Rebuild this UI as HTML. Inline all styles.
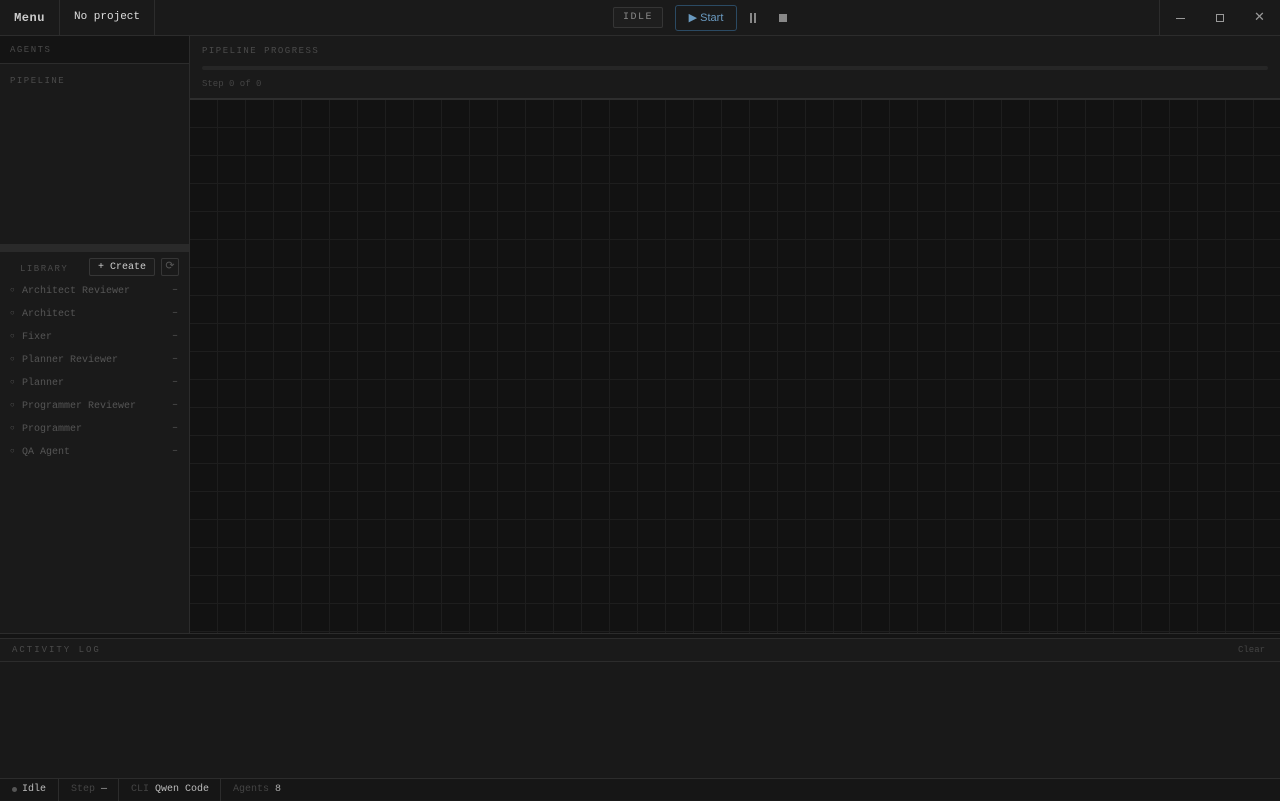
<!DOCTYPE html><html><head><style>
*{box-sizing:border-box;margin:0;padding:0}
body{width:1280px;height:800px;background:#191919;font-family:"Liberation Mono",monospace;overflow:hidden;position:relative;color:#ddd}
.a{position:absolute}
.lbl{font-size:9px;letter-spacing:1.5px;color:#4a4a4a}
.st span.t{position:absolute;top:0;line-height:22px}
</style></head><body>
<div class="a" style="left:0;top:0;width:1280px;height:36px;background:#1a1a1a;border-bottom:1px solid #2c2c2c"></div>
<div class="a" style="left:0;top:0;width:60px;height:35px;border-right:1px solid #2c2c2c;font-size:12px;font-weight:bold;color:#ccc;line-height:36px;text-align:center;letter-spacing:0.5px">Menu</div>
<div class="a" style="left:60px;top:0;width:95px;height:35px;border-right:1px solid #2c2c2c;font-size:11px;color:#ddd;line-height:35px;text-align:center">No project</div>
<div class="a" style="left:613px;top:7px;width:50px;height:21px;border:1px solid #353535;background:#1e1e1e;border-radius:2px;font-size:10px;letter-spacing:1.5px;color:#888;text-align:center;line-height:19px">IDLE</div>
<div class="a" style="left:675px;top:5px;width:62px;height:26px;border:1px solid #2b4a63;border-radius:3px;font-family:'Liberation Sans',sans-serif;font-size:11px;color:#6a9ac0;text-align:center;line-height:24px">▶ Start</div>
<div class="a" style="left:750px;top:13px;width:2px;height:10px;background:#888"></div>
<div class="a" style="left:754px;top:13px;width:2px;height:10px;background:#888"></div>
<div class="a" style="left:779px;top:14px;width:8px;height:8px;background:#888"></div>
<div class="a" style="left:1159px;top:0;width:1px;height:35px;background:#2c2c2c"></div>
<div class="a" style="left:1176px;top:18px;width:9px;height:1px;background:#999"></div>
<div class="a" style="left:1216px;top:14px;width:8px;height:8px;border:1px solid #999"></div>
<div class="a" style="left:1254px;top:9px;font-size:13px;color:#999;font-family:'Liberation Sans',sans-serif">✕</div>
<div class="a" style="left:0;top:36px;width:190px;height:597px;background:#1a1a1a;border-right:1px solid #2c2c2c"></div>
<div class="a" style="left:0;top:36px;width:189px;height:28px;background:#141414;border-bottom:1px solid #2c2c2c"></div>
<div class="a lbl" style="left:10px;top:45px">AGENTS</div>
<div class="a lbl" style="left:10px;top:76px">PIPELINE</div>
<div class="a" style="left:0;top:244px;width:189px;height:8px;background:#2a2a2a"></div>
<div class="a lbl" style="left:20px;top:264px">LIBRARY</div>
<div class="a" style="left:89px;top:258px;width:66px;height:18px;border:1px solid #363636;background:#1c1c1c;border-radius:2px;font-size:10px;color:#ccc;text-align:center;line-height:18px">+ Create</div>
<div class="a" style="left:161px;top:258px;width:18px;height:18px;border:1px solid #363636;border-radius:2px;font-size:11px;color:#555;text-align:center;line-height:16px">⟳</div>
<div class="a" style="left:0;top:281px;width:189px;font-size:10px;color:#555">
<div style="height:23px;position:relative"><span style="position:absolute;left:10px;top:5px;font-size:8px">○</span><span style="position:absolute;left:22px;top:5px">Architect Reviewer</span><span style="position:absolute;left:172px;top:4px">–</span></div>
<div style="height:23px;position:relative"><span style="position:absolute;left:10px;top:5px;font-size:8px">○</span><span style="position:absolute;left:22px;top:5px">Architect</span><span style="position:absolute;left:172px;top:4px">–</span></div>
<div style="height:23px;position:relative"><span style="position:absolute;left:10px;top:5px;font-size:8px">○</span><span style="position:absolute;left:22px;top:5px">Fixer</span><span style="position:absolute;left:172px;top:4px">–</span></div>
<div style="height:23px;position:relative"><span style="position:absolute;left:10px;top:5px;font-size:8px">○</span><span style="position:absolute;left:22px;top:5px">Planner Reviewer</span><span style="position:absolute;left:172px;top:4px">–</span></div>
<div style="height:23px;position:relative"><span style="position:absolute;left:10px;top:5px;font-size:8px">○</span><span style="position:absolute;left:22px;top:5px">Planner</span><span style="position:absolute;left:172px;top:4px">–</span></div>
<div style="height:23px;position:relative"><span style="position:absolute;left:10px;top:5px;font-size:8px">○</span><span style="position:absolute;left:22px;top:5px">Programmer Reviewer</span><span style="position:absolute;left:172px;top:4px">–</span></div>
<div style="height:23px;position:relative"><span style="position:absolute;left:10px;top:5px;font-size:8px">○</span><span style="position:absolute;left:22px;top:5px">Programmer</span><span style="position:absolute;left:172px;top:4px">–</span></div>
<div style="height:23px;position:relative"><span style="position:absolute;left:10px;top:5px;font-size:8px">○</span><span style="position:absolute;left:22px;top:5px">QA Agent</span><span style="position:absolute;left:172px;top:4px">–</span></div>
</div>
<div class="a" style="left:190px;top:36px;width:1090px;height:64px;background:#1a1a1a;border-bottom:2px solid #2e2e2e"></div>
<div class="a lbl" style="left:202px;top:46px">PIPELINE PROGRESS</div>
<div class="a" style="left:202px;top:66px;width:1066px;height:4px;background:#262626;border-radius:2px"></div>
<div class="a" style="left:202px;top:79px;font-size:9px;color:#444">Step 0 of 0</div>
<div class="a" style="left:190px;top:100px;width:1090px;height:533px;background-color:#121212;background-image:linear-gradient(to right,transparent 27px,#1e1e1e 27px),linear-gradient(to bottom,transparent 27px,#1e1e1e 27px);background-size:28px 28px;background-position:0 0"></div>
<div class="a" style="left:0;top:633px;width:1280px;height:6px;background:#141414;border-top:1px solid #2c2c2c;border-bottom:1px solid #2c2c2c"></div>
<div class="a" style="left:0;top:639px;width:1280px;height:23px;border-bottom:1px solid #2c2c2c;background:#1a1a1a"></div>
<div class="a lbl" style="left:12px;top:645px;letter-spacing:2px">ACTIVITY LOG</div>
<div class="a" style="left:1238px;top:645px;font-size:9px;color:#444">Clear</div>
<div class="a st" style="left:0;top:778px;width:1280px;height:22px;background:#161616;border-top:1px solid #2c2c2c;font-size:10px">
<span class="a" style="left:12px;top:8px;width:5px;height:5px;border-radius:50%;background:#555"></span>
<span class="t" style="left:22px;color:#bbb">Idle</span>
<span class="a" style="left:58px;top:0;width:1px;height:22px;background:#2c2c2c"></span>
<span class="t" style="left:71px;color:#444">Step <span style="color:#aaa">—</span></span>
<span class="a" style="left:118px;top:0;width:1px;height:22px;background:#2c2c2c"></span>
<span class="t" style="left:131px;color:#444">CLI <span style="color:#bbb">Qwen Code</span></span>
<span class="a" style="left:220px;top:0;width:1px;height:22px;background:#2c2c2c"></span>
<span class="t" style="left:233px;color:#444">Agents <span style="color:#aaa">8</span></span>
</div>
</body></html>
